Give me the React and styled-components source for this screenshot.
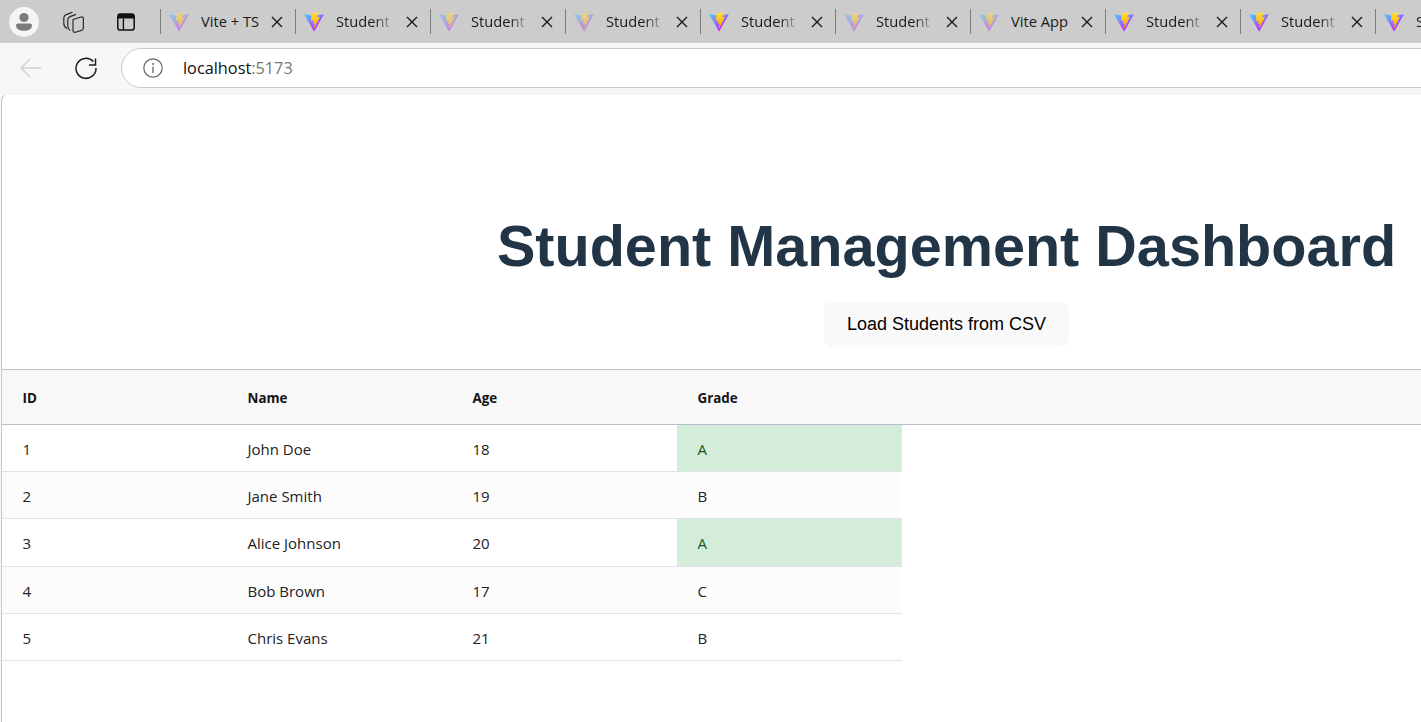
import React from "react";
import styled, { createGlobalStyle } from "styled-components";

const GlobalStyle = createGlobalStyle`
  html, body {
    margin: 0;
    padding: 0;
    overflow: hidden;
    background: #fff;
  }
`;

const tabs = [
  { title: "Vite + TS", dim: true },
  { title: "Student Management", fade: true },
  { title: "Student Management", dim: true, fade: true },
  { title: "Student Management", dim: true, fade: true },
  { title: "Student Management", fade: true },
  { title: "Student Management", dim: true, fade: true },
  { title: "Vite App", dim: true },
  { title: "Student Management", fade: true },
  { title: "Student Management", fade: true },
  { title: "Student Management", fade: true },
];

const students = [
  { id: 1, name: "John Doe", age: 18, grade: "A" },
  { id: 2, name: "Jane Smith", age: 19, grade: "B" },
  { id: 3, name: "Alice Johnson", age: 20, grade: "A" },
  { id: 4, name: "Bob Brown", age: 17, grade: "C" },
  { id: 5, name: "Chris Evans", age: 21, grade: "B" },
];

const ViteIcon = () => (
  <svg width="20" height="20" viewBox="0 0 410 404" fill="none">
    <path
      d="M399.641 59.5246L215.643 388.545C211.844 395.338 202.084 395.378 198.228 388.618L10.5817 59.5563C6.38087 52.1896 12.6802 43.2665 21.0281 44.7586L205.223 77.6824C206.398 77.8924 207.601 77.8904 208.776 77.6763L389.119 44.8058C397.439 43.2894 403.768 52.1434 399.641 59.5246Z"
      fill="url(#viteBody)"
    />
    <path
      d="M292.965 1.5744L156.801 28.2552C154.563 28.6937 152.906 30.5903 152.771 32.8664L144.395 174.33C144.198 177.662 147.258 180.248 150.51 179.498L188.42 170.749C191.967 169.931 195.172 173.055 194.443 176.622L183.18 231.775C182.422 235.487 185.907 238.661 189.532 237.56L212.947 230.446C216.577 229.344 220.065 232.527 219.297 236.242L201.398 322.875C200.278 328.294 207.486 331.249 210.492 326.603L212.5 323.5L323.454 102.072C325.312 98.3645 322.108 94.137 318.036 94.9228L279.014 102.454C275.347 103.161 272.227 99.746 273.262 96.1583L298.731 7.86689C299.767 4.27314 296.636 0.855181 292.965 1.5744Z"
      fill="url(#viteBolt)"
    />
  </svg>
);

const ViteGradients = () => (
  <svg width="0" height="0" style={{ position: "absolute" }}>
    <defs>
      <linearGradient id="viteBody" x1="6" y1="33" x2="235" y2="344" gradientUnits="userSpaceOnUse">
        <stop stopColor="#41D1FF" />
        <stop offset="1" stopColor="#BD34FE" />
      </linearGradient>
      <linearGradient id="viteBolt" x1="194.651" y1="8.81818" x2="236.076" y2="292.989" gradientUnits="userSpaceOnUse">
        <stop stopColor="#FFEA83" />
        <stop offset="0.08" stopColor="#FFDD35" />
        <stop offset="1" stopColor="#FFA800" />
      </linearGradient>
    </defs>
  </svg>
);

const CloseIcon = () => (
  <svg width="12" height="12" viewBox="0 0 12 12">
    <path d="M1 1L11 11M11 1L1 11" stroke="#1a1a1a" strokeWidth="1.4" fill="none" />
  </svg>
);

const Avatar = () => (
  <AvatarCircle>
    <svg width="30" height="30" viewBox="0 0 30 30">
      <circle cx="15" cy="10.5" r="4.6" fill="#7b7b7b" />
      <path d="M7 18.5c0-1.2 1-2 2.2-2h11.6c1.2 0 2.2.8 2.2 2 0 3.6-3.6 5.3-8 5.3s-8-1.7-8-5.3z" fill="#7b7b7b" />
    </svg>
  </AvatarCircle>
);

// three slanted cards stacked back to front
const CollectionsIcon = () => (
  <svg width="22" height="22" viewBox="0 0 22 22" fill="none" stroke="#2a2a2a" strokeWidth="1.2" strokeLinejoin="round">
    <path d="M10.5 1.2L4.2 3.6C2.6 4.2 1.8 5.4 1.8 7V12.5C1.8 14.6 3 16.4 5 17.6" />
    <path d="M14 3.4L8 5.6C6.5 6.2 5.8 7.3 5.8 8.8V15.5C5.8 17.2 6.8 18.6 8.4 19.6" />
    <path d="M11 8.5L19 6C20.5 5.6 21.4 6.4 21.4 7.8V17C21.4 18.4 20.8 19 19.5 19.4L13.5 21.2C12 21.6 11 20.8 11 19.4Z" />
  </svg>
);

const TabStripIcon = () => (
  <svg width="20" height="20" viewBox="0 0 20 20" fill="none">
    <rect x="1.8" y="2" width="16.4" height="16" rx="2.6" stroke="#111" strokeWidth="1.5" />
    <path d="M2 4.5A2.5 2.5 0 0 1 4.5 2h11A2.5 2.5 0 0 1 18 4.5V6.5H2z" fill="#111" />
    <path d="M7.4 6.5V18" stroke="#111" strokeWidth="1.4" />
  </svg>
);

const BackIcon = () => (
  <svg width="24" height="24" viewBox="0 0 24 24" fill="none" stroke="#d2d2d2" strokeWidth="1.5">
    <path d="M22 12H2M11 3l-9 9 9 9" />
  </svg>
);

const ReloadIcon = () => (
  <svg width="24" height="24" viewBox="0 0 24 24" fill="none" stroke="#1c1c1c" strokeWidth="1.5">
    <path d="M19.4 5.6A10 10 0 1 0 22 12" />
    <path d="M21.5 2.5V9H15" />
  </svg>
);

const InfoIcon = () => (
  <svg width="20" height="20" viewBox="0 0 20 20" fill="none">
    <circle cx="10" cy="10" r="9.2" stroke="#666" strokeWidth="1.2" />
    <path d="M10 8.8V15" stroke="#555" strokeWidth="1.2" />
    <circle cx="10" cy="6" r="0.9" fill="#555" />
  </svg>
);

const App = () => {
  return (
    <Browser>
      <GlobalStyle />
      <ViteGradients />
      <TabStrip>
        <WindowControls>
          <Avatar />
          <CollectionsSlot>
            <CollectionsIcon />
          </CollectionsSlot>
          <TabsSlot>
            <TabStripIcon />
          </TabsSlot>
        </WindowControls>
        {tabs.map((tab, i) => (
          <Tab key={i}>
            <Favicon $dim={tab.dim}>
              <ViteIcon />
            </Favicon>
            <TabTitle $fade={tab.fade}>{tab.title}</TabTitle>
            <CloseIcon />
          </Tab>
        ))}
      </TabStrip>

      <Toolbar>
        <NavButton>
          <BackIcon />
        </NavButton>
        <NavButton>
          <ReloadIcon />
        </NavButton>
        <AddressBar>
          <InfoIcon />
          <Url>
            localhost<Port>:5173</Port>
          </Url>
        </AddressBar>
      </Toolbar>

      <Page>
        <Content>
          <Title>Student Management Dashboard</Title>
          <LoadButton>Load Students from CSV</LoadButton>
          <HeaderRow>
            <HeaderCell>ID</HeaderCell>
            <HeaderCell>Name</HeaderCell>
            <HeaderCell>Age</HeaderCell>
            <HeaderCell>Grade</HeaderCell>
          </HeaderRow>
          {students.map((s, i) => (
            <Row key={s.id} $even={i % 2 === 1}>
              <Cell>{s.id}</Cell>
              <Cell>{s.name}</Cell>
              <Cell>{s.age}</Cell>
              <Cell $top={s.grade === "A"}>{s.grade}</Cell>
            </Row>
          ))}
        </Content>
      </Page>
    </Browser>
  );
};

export default App;

const Browser = styled.div`
  width: 1421px;
  height: 722px;
  overflow: hidden;
  display: flex;
  flex-direction: column;
  background: #f7f7f7;
`;

const TabStrip = styled.div`
  height: 43px;
  flex: none;
  display: flex;
  align-items: center;
  background: #cccccc;
`;

const WindowControls = styled.div`
  width: 160px;
  flex: none;
  display: flex;
  align-items: center;
  padding-left: 9px;
  box-sizing: border-box;
`;

const AvatarCircle = styled.div`
  width: 30px;
  height: 30px;
  border-radius: 50%;
  background: #f5f5f5;
  flex: none;
`;

const CollectionsSlot = styled.div`
  margin-left: 23px;
  display: flex;
`;

const TabsSlot = styled.div`
  margin-left: 32px;
  display: flex;
`;

const Tab = styled.div`
  width: 135px;
  height: 25px;
  flex: none;
  box-sizing: border-box;
  display: flex;
  align-items: center;
  border-left: 1px solid #7d7d7d;
  padding-left: 8px;
`;

const Favicon = styled.div`
  width: 20px;
  height: 20px;
  flex: none;
  opacity: ${(p) => (p.$dim ? 0.45 : 1)};
  svg {
    display: block;
  }
`;

const TabTitle = styled.div`
  width: 70px;
  margin-left: 12px;
  font-family: "Open Sans", sans-serif;
  font-size: 14.7px;
  line-height: 20px;
  margin-top: -2px;
  color: #1a1a1a;
  white-space: nowrap;
  overflow: hidden;
  ${(p) =>
    p.$fade &&
    `
    width: 59px;
    margin-right: 11px;
    -webkit-mask-image: linear-gradient(to right, #000 65%, transparent 100%);
    mask-image: linear-gradient(to right, #000 65%, transparent 100%);
  `}
`;

const Toolbar = styled.div`
  height: 50px;
  flex: none;
  display: flex;
  align-items: center;
  background: #f7f7f7;
  padding-left: 19px;
`;

const NavButton = styled.div`
  width: 24px;
  height: 24px;
  margin-right: 31px;
  flex: none;
  svg {
    display: block;
  }
`;

const AddressBar = styled.div`
  width: 1400px;
  height: 40px;
  flex: none;
  margin-left: -8px;
  box-sizing: border-box;
  display: flex;
  align-items: center;
  gap: 20px;
  padding-left: 21px;
  background: #fff;
  border: 1px solid #c9c9c9;
  border-radius: 20px;
`;

const Url = styled.div`
  font-family: "Open Sans", sans-serif;
  font-size: 16.3px;
  color: #111;
`;

const Port = styled.span`
  color: #777;
`;

const Page = styled.div`
  flex: 1;
  min-height: 0;
  margin-left: 1px;
  background: #fff;
  border-left: 1px solid #c8c8c8;
  border-top: 1px solid #ececec;
  border-top-left-radius: 8px;
  overflow: hidden;
`;

const Content = styled.div`
  width: 1889px;
  display: flex;
  flex-direction: column;
  align-items: center;
`;

const Title = styled.h1`
  margin: 116px 0 0;
  font-family: "Liberation Sans", Arial, sans-serif;
  font-size: 57.6px;
  line-height: 72px;
  font-weight: 700;
  color: #213547;
  white-space: nowrap;
`;

const LoadButton = styled.button`
  margin-top: 20px;
  padding: 11px 23px;
  font-family: "Liberation Sans", Arial, sans-serif;
  font-size: 18px;
  line-height: 23px;
  color: #000;
  background: #f9f9f9;
  border: none;
  border-radius: 8px;
`;

const HeaderRow = styled.div`
  align-self: stretch;
  margin-top: 22px;
  height: 55.8px;
  box-sizing: border-box;
  display: grid;
  grid-template-columns: repeat(4, 225px);
  background: #f8f8f8;
  border-top: 1px solid #bcbfc9;
  border-bottom: 1px solid #bcbfc9;
`;

const HeaderCell = styled.div`
  display: flex;
  align-items: center;
  padding: 2px 0 0 20.5px;
  font-family: "Open Sans", sans-serif;
  font-size: 13.4px;
  font-weight: 700;
  color: #141414;
`;

const Row = styled.div`
  align-self: flex-start;
  width: 900px;
  height: 47.25px;
  box-sizing: border-box;
  display: grid;
  grid-template-columns: repeat(4, 225px);
  background: ${(p) => (p.$even ? "#fcfcfc" : "#fff")};
  border-bottom: 1px solid #dfe2e8;
`;

const Cell = styled.div`
  display: flex;
  align-items: center;
  padding: 2px 0 0 20.5px;
  font-family: "Open Sans", sans-serif;
  font-size: 15px;
  color: ${(p) => (p.$top ? "#155724" : "#222")};
  background: ${(p) => (p.$top ? "#d4edda" : "transparent")};
`;
